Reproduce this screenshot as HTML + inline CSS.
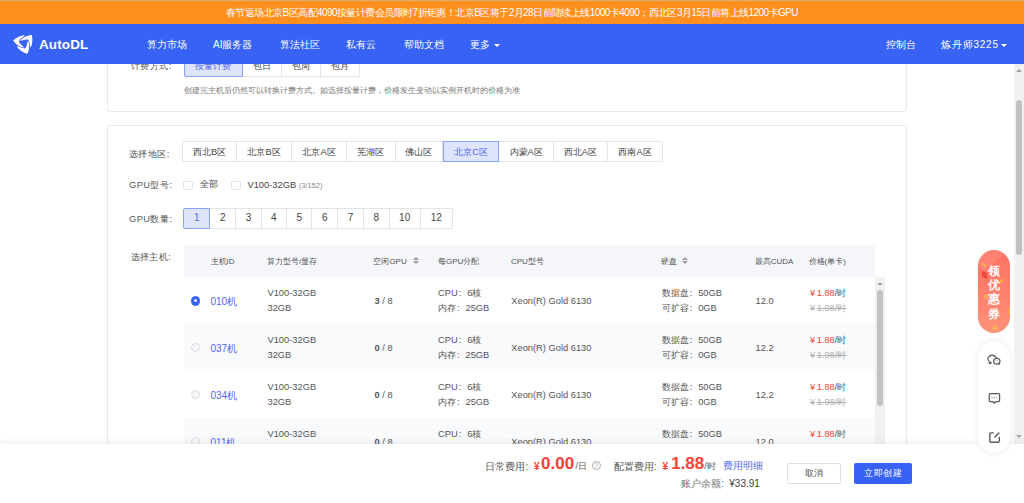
<!DOCTYPE html>
<html><head><meta charset="utf-8">
<style>
*{box-sizing:border-box;margin:0;padding:0}
html,body{width:1024px;height:503px;overflow:hidden;background:#fff}
body{position:relative;font-family:"Liberation Sans",sans-serif;color:#333;font-size:9.3px}
.a{position:absolute;white-space:nowrap}
#banner{left:0;top:0;width:1024px;height:24px;background:#ff9020;border-top:1px solid #dcae72;color:#fff;font-size:10px;letter-spacing:-0.56px;z-index:5;line-height:23px;text-align:center}
#nav{left:0;top:24px;width:1024px;height:40px;background:#3762f4;color:#fff;font-size:10px;z-index:5}
#nav .i{position:absolute;top:0.8px;line-height:40px}
.card{position:absolute;border:1px solid #e9eaee;border-radius:3px;background:#fff}
.lbl{color:#555;font-size:9.3px;letter-spacing:0.45px}
.bg{position:absolute;display:flex;height:20px}
.bg div{border:1px solid #e3e4e8;border-left:none;height:100%;display:flex;align-items:center;justify-content:center;color:#444;font-size:9.3px}
.bg div:first-child{border-left:1px solid #e3e4e8;border-radius:2px 0 0 2px}
.bg div:last-child{border-radius:0 2px 2px 0}
.rg div{padding-top:1.5px}
.cnt div{padding-bottom:1.5px;font-size:10px}
.bg div.sel{background:#dde4fc;border:1px solid #88a2f7;color:#5468f2}
.th{position:absolute;top:246px;line-height:32px;font-size:8px;color:#555}
.srt{position:absolute;top:256.7px;width:6px;height:8px}
.srt:before{content:"";position:absolute;left:0;top:0;border-left:3px solid transparent;border-right:3px solid transparent;border-bottom:3px solid #9a9a9a}
.srt:after{content:"";position:absolute;left:0;top:4.7px;border-left:3px solid transparent;border-right:3px solid transparent;border-top:3px solid #9a9a9a}
.k{display:inline-block;width:9.5px;padding-left:1px}
.row{position:absolute;left:184px;width:691px;height:47px}
.row.s{background:#f9fafc}
.c{position:absolute;font-size:9.3px;color:#555;line-height:15px;white-space:nowrap}
.radio{position:absolute;left:6.6px;top:19.3px;width:9.7px;height:9.7px;border-radius:50%;border:1px solid #dcdde0;background:#f6f7f9}
.radio.on{background:#3762f4;border-color:#3762f4}
.radio.on:after{content:"";position:absolute;left:2.1px;top:2.1px;width:3.5px;height:3.5px;border-radius:50%;background:#fff}
.red{color:#f44336}
</style></head><body>

<div id="banner" class="a">春节返场北京B区高配4090按量计费会员限时7折钜惠！北京B区将于2月28日前陆续上线1000卡4090；西北区3月15日前将上线1200卡GPU</div>

<!-- card 1 (scrolled) -->
<div class="card" style="left:107px;top:20px;width:800px;height:92px">
</div>
<div class="a lbl" style="left:131px;top:58.5px;line-height:14px">计费方式:</div>
<div class="bg" style="left:184px;top:56.5px">
  <div class="sel" style="width:58.5px">按量计费</div>
  <div style="width:39px">包日</div>
  <div style="width:39.5px">包周</div>
  <div style="width:39px">包月</div>
</div>
<div class="a" style="left:184px;top:84px;line-height:13px;font-size:8px;color:#777">创建完主机后仍然可以转换计费方式。如选择按量计费，价格发生变动以实例开机时的价格为准</div>

<!-- card 2 -->
<div class="card" style="left:107px;top:124.6px;width:800px;height:400px"></div>
<div class="a lbl" style="left:129px;top:146.5px;line-height:15px">选择地区:</div>
<div class="bg rg" style="left:182px;top:141.2px;height:20.6px">
  <div style="width:55px">西北B区</div>
  <div style="width:55px">北京B区</div>
  <div style="width:55px">北京A区</div>
  <div style="width:48.5px">芜湖区</div>
  <div style="width:47.2px">佛山区</div>
  <div class="sel" style="width:56.8px">北京C区</div>
  <div style="width:54.3px">内蒙A区</div>
  <div style="width:54px">西北A区</div>
  <div style="width:55.5px">西南A区</div>
</div>

<div class="a lbl" style="left:129px;top:177.5px;line-height:15px">GPU型号:</div>
<div class="a" style="left:183.3px;top:180.5px;width:10px;height:9.5px;border:1px solid #e2e3e8;border-radius:2px"></div>
<div class="a" style="left:200px;top:177px;line-height:15px;color:#444">全部</div>
<div class="a" style="left:231.3px;top:180.5px;width:10px;height:9.5px;border:1px solid #e2e3e8;border-radius:2px"></div>
<div class="a" style="left:247.5px;top:177.5px;line-height:15px;color:#444">V100-32GB <span style="font-size:7.5px;color:#888">(3/152)</span></div>

<div class="a lbl" style="left:129px;top:212px;line-height:15px">GPU数量:</div>
<div class="bg cnt" style="left:183.3px;top:207.6px;height:21.7px">
  <div class="sel" style="width:27.2px">1</div>
  <div style="width:25.7px">2</div>
  <div style="width:25.5px">3</div>
  <div style="width:25.3px">4</div>
  <div style="width:25.5px">5</div>
  <div style="width:25.7px">6</div>
  <div style="width:25.5px">7</div>
  <div style="width:26px">8</div>
  <div style="width:31px">10</div>
  <div style="width:32.3px">12</div>
</div>

<div class="a lbl" style="left:130.5px;top:249.5px;line-height:15px">选择主机:</div>

<!-- table header -->
<div class="a" style="left:184px;top:245px;width:691px;height:32px;background:#f4f6fa"></div>
<div class="th" style="left:210.5px">主机ID</div>
<div class="th" style="left:267px">算力型号/显存</div>
<div class="th" style="left:373.4px">空闲GPU</div><div class="srt" style="left:412.5px"></div>
<div class="th" style="left:438px">每GPU分配</div>
<div class="th" style="left:511px">CPU型号</div>
<div class="th" style="left:661px">硬盘</div><div class="srt" style="left:682.2px"></div>
<div class="th" style="left:754.7px">最高CUDA</div>
<div class="th" style="left:808.6px">价格(单卡)</div>

<!-- rows -->
<div class="row" style="top:276.6px">
  <div class="radio on"></div>
  <div class="c" style="left:26.5px;top:17px;color:#5468f2;font-size:10px">010机</div>
  <div class="c" style="left:83.5px;top:9.5px">V100-32GB<br>32GB</div>
  <div class="c" style="left:190.5px;top:17px"><b>3</b> / 8</div>
  <div class="c" style="left:254px;top:9.5px">CPU<span class="k">:</span>6核<br>内存<span class="k">:</span>25GB</div>
  <div class="c" style="left:327.3px;top:17px">Xeon(R) Gold 6130</div>
  <div class="c" style="left:477.7px;top:9.5px">数据盘<span class="k">:</span>50GB<br>可扩容<span class="k">:</span>0GB</div>
  <div class="c" style="left:571.5px;top:17px">12.0</div>
  <div class="c" style="left:626px;top:9.5px"><span class="red"><span style="margin-right:1.5px">¥</span>1.88</span>/时<br><s style="color:#b0b0b0">¥<span style="margin-left:1.5px">1.98/时</span></s></div>
</div>
<div class="row s" style="top:323.5px">
  <div class="radio"></div>
  <div class="c" style="left:26.5px;top:17px;color:#5468f2;font-size:10px">037机</div>
  <div class="c" style="left:83.5px;top:9.5px">V100-32GB<br>32GB</div>
  <div class="c" style="left:190.5px;top:17px"><b>0</b> / 8</div>
  <div class="c" style="left:254px;top:9.5px">CPU<span class="k">:</span>6核<br>内存<span class="k">:</span>25GB</div>
  <div class="c" style="left:327.3px;top:17px">Xeon(R) Gold 6130</div>
  <div class="c" style="left:477.7px;top:9.5px">数据盘<span class="k">:</span>50GB<br>可扩容<span class="k">:</span>0GB</div>
  <div class="c" style="left:571.5px;top:17px">12.2</div>
  <div class="c" style="left:626px;top:9.5px"><span class="red"><span style="margin-right:1.5px">¥</span>1.88</span>/时<br><s style="color:#b0b0b0">¥<span style="margin-left:1.5px">1.98/时</span></s></div>
</div>
<div class="row" style="top:370.5px">
  <div class="radio"></div>
  <div class="c" style="left:26.5px;top:17px;color:#5468f2;font-size:10px">034机</div>
  <div class="c" style="left:83.5px;top:9.5px">V100-32GB<br>32GB</div>
  <div class="c" style="left:190.5px;top:17px"><b>0</b> / 8</div>
  <div class="c" style="left:254px;top:9.5px">CPU<span class="k">:</span>6核<br>内存<span class="k">:</span>25GB</div>
  <div class="c" style="left:327.3px;top:17px">Xeon(R) Gold 6130</div>
  <div class="c" style="left:477.7px;top:9.5px">数据盘<span class="k">:</span>50GB<br>可扩容<span class="k">:</span>0GB</div>
  <div class="c" style="left:571.5px;top:17px">12.2</div>
  <div class="c" style="left:626px;top:9.5px"><span class="red"><span style="margin-right:1.5px">¥</span>1.88</span>/时<br><s style="color:#b0b0b0">¥<span style="margin-left:1.5px">1.98/时</span></s></div>
</div>
<div class="row s" style="top:417.5px">
  <div class="radio"></div>
  <div class="c" style="left:26.5px;top:17px;color:#5468f2;font-size:10px">011机</div>
  <div class="c" style="left:83.5px;top:9.5px">V100-32GB<br>32GB</div>
  <div class="c" style="left:190.5px;top:17px"><b>0</b> / 8</div>
  <div class="c" style="left:254px;top:9.5px">CPU<span class="k">:</span>6核<br>内存<span class="k">:</span>25GB</div>
  <div class="c" style="left:327.3px;top:17px">Xeon(R) Gold 6130</div>
  <div class="c" style="left:477.7px;top:9.5px">数据盘<span class="k">:</span>50GB<br>可扩容<span class="k">:</span>0GB</div>
  <div class="c" style="left:571.5px;top:17px">12.0</div>
  <div class="c" style="left:626px;top:9.5px"><span class="red"><span style="margin-right:1.5px">¥</span>1.88</span>/时<br><s style="color:#b0b0b0">¥<span style="margin-left:1.5px">1.98/时</span></s></div>
</div>

<!-- table scrollbar -->
<div class="a" style="left:875px;top:277px;width:10px;height:200px;background:#f1f1f1"></div>
<div class="a" style="left:877.2px;top:289.7px;width:6px;height:116.5px;background:#c1c1c1;border-radius:3px"></div>
<div class="a" style="left:877px;top:281.8px;width:0;height:0;border-left:3px solid transparent;border-right:3px solid transparent;border-bottom:3.3px solid #a3a3a3"></div>

<!-- nav -->
<div id="nav" class="a">
  <svg class="a" style="left:11px;top:8px" width="24" height="24" viewBox="0 0 24 24"><g fill="#fff" transform="rotate(5 13.4 10.9) translate(-0.3 0.2)">
<path id="lb" d="M12.8,3.5 C9.4,4.1 5.4,6.6 2.9,9.3 C5,12 9,14.3 12.9,15 C10.6,13.4 8.2,11.5 7.6,9.6 C8.3,7.5 10.4,5.3 12.8,3.5 Z" stroke="#fff" stroke-width="1" stroke-linejoin="round"/>
<use href="#lb" transform="rotate(120 13.4 10.9)"/><use href="#lb" transform="rotate(240 13.4 10.9)"/></g></svg>
  <div class="i" style="left:39px;top:0.7px;font-weight:bold;font-size:13.5px;letter-spacing:0.1px">AutoDL</div>
  <div class="i" style="left:147px">算力市场</div>
  <div class="i" style="left:213px">AI服务器</div>
  <div class="i" style="left:280px">算法社区</div>
  <div class="i" style="left:346px">私有云</div>
  <div class="i" style="left:403.5px">帮助文档</div>
  <div class="i" style="left:470px">更多</div><div class="a" style="left:493.5px;top:19.5px;width:0;height:0;border-left:3.3px solid transparent;border-right:3.3px solid transparent;border-top:3.6px solid #fff"></div>
  <div class="i" style="left:885.5px">控制台</div>
  <div class="i" style="left:941px;letter-spacing:0.8px">炼丹师3225</div><div class="a" style="left:1001px;top:19.5px;width:0;height:0;border-left:3.3px solid transparent;border-right:3.3px solid transparent;border-top:3.6px solid #fff"></div>
</div>

<!-- main scrollbar -->
<div class="a" style="left:1014px;top:64px;width:10px;height:380px;background:#f1f1f1"></div>
<div class="a" style="left:1016px;top:100px;width:6px;height:155px;background:#c1c1c1;border-radius:3px"></div>
<div class="a" style="left:1015.5px;top:68.5px;width:0;height:0;border-left:3.5px solid transparent;border-right:3.5px solid transparent;border-bottom:3.5px solid #a3a3a3"></div>
<div class="a" style="left:1015.5px;top:435px;width:0;height:0;border-left:3.5px solid transparent;border-right:3.5px solid transparent;border-top:3.5px solid #a3a3a3"></div>

<!-- bottom bar -->
<div class="a" style="left:0;top:444px;width:1024px;height:59px;background:#fff;box-shadow:0 -2px 6px rgba(30,40,90,0.07)"></div>

<div class="a" style="left:485px;top:459.3px;line-height:15px;color:#555;font-size:10px;letter-spacing:0.1px">日常费用:</div>
<div class="a red" style="left:534px;top:458.5px;line-height:15px;font-size:10px;font-weight:bold">¥</div>
<div class="a red" style="left:541px;top:454px;line-height:20px;font-size:17px;font-weight:bold">0.00</div>
<div class="a" style="left:575.5px;top:458.8px;line-height:15px;color:#555">/日</div>
<div class="a" style="left:591.7px;top:461px;width:9px;height:9px;border:1px solid #aaa;border-radius:50%;font-size:6.5px;line-height:7px;text-align:center;color:#999">?</div>
<div class="a" style="left:613.8px;top:459px;line-height:15px;color:#555;font-size:10px">配置费用:</div>
<div class="a red" style="left:662.5px;top:458.5px;line-height:15px;font-size:10px;font-weight:bold">¥</div>
<div class="a red" style="left:671.2px;top:454px;line-height:20px;font-size:17px;font-weight:bold">1.88</div>
<div class="a" style="left:704.2px;top:458.8px;line-height:15px;color:#555">/时</div>
<div class="a" style="left:723px;top:458.2px;line-height:15px;color:#5468f2;font-size:10px">费用明细</div>
<div class="a" style="left:681px;top:476.3px;line-height:15px;color:#777;font-size:10px">账户余额:</div>
<div class="a" style="left:729.3px;top:476.3px;line-height:15px;color:#444;font-size:10px">¥33.91</div>
<div class="a" style="left:787px;top:463px;width:54px;height:21.3px;border:1px solid #dcdfe6;border-radius:2px;line-height:19px;text-align:center;color:#555">取消</div>
<div class="a" style="left:853.7px;top:463px;width:58.3px;height:21.3px;background:#3762f4;border-radius:2px;line-height:21px;text-align:center;color:#fff;letter-spacing:0.6px;padding-left:0.6px">立即创建</div>

<div class="a" style="left:978px;top:250px;width:32px;height:82.5px;border-radius:16px;background:linear-gradient(170deg,#ff6f5f,#ff937b);overflow:hidden">
 <div class="a" style="left:-6px;top:-10px;width:60px;height:14px;background:rgba(255,255,255,0.10);transform:rotate(-40deg)"></div>
 <div class="a" style="left:3px;top:14px;width:6px;height:2px;background:#ffb347;transform:rotate(40deg)"></div>
 <div class="a" style="left:4px;top:21.5px;width:5px;height:6px;background:#ec4a35;transform:skewY(25deg)"></div>
 <div class="a" style="left:21px;top:30px;width:5px;height:2px;background:#ffb347;transform:rotate(-45deg)"></div>
 <div class="a" style="left:6px;top:44px;width:5px;height:5px;border-radius:50%;background:rgba(255,176,90,0.8)"></div>
 <div class="a" style="left:28.5px;top:60px;width:5px;height:2px;background:#ffb347;transform:rotate(-60deg)"></div>
 <div class="a" style="left:14px;top:74.5px;width:6px;height:6px;border-radius:50%;background:rgba(255,176,90,0.8)"></div>
 <div class="a" style="left:0;top:13.5px;width:32px;line-height:14.4px;text-align:center;color:#fff;font-weight:bold;font-size:11.5px;white-space:normal">领<br>优<br>惠<br>券</div>
</div>
<div class="a" style="left:978px;top:340.6px;width:32px;height:112px;border-radius:16px;background:#fff;box-shadow:0 0 6px rgba(0,0,0,0.09)"></div>
<svg class="a" style="left:984px;top:350px" width="20" height="100" viewBox="984 350 20 100" fill="none" stroke="#5a5a5a" stroke-linecap="round" stroke-linejoin="round">
 <path d="M990.1,362.2 A4.2,3.8 0 1 1 993.7,362.4" stroke-width="1.2"/>
 <path d="M990.1,362.2 L989.1,363.6 L991.4,362.9" stroke-width="1.1"/>
 <ellipse cx="996.8" cy="361.2" rx="3.2" ry="2.9" fill="#fff" stroke-width="1.2"/>
 <path d="M998.6,363.4 L999.6,364.3 L999.3,362.8" stroke-width="1"/>
 <circle cx="990.6" cy="356.8" r="0.45" fill="#5a5a5a" stroke="none"/><circle cx="993.2" cy="356.8" r="0.45" fill="#5a5a5a" stroke="none"/>
 <circle cx="995.8" cy="360.6" r="0.4" fill="#5a5a5a" stroke="none"/><circle cx="997.8" cy="360.6" r="0.4" fill="#5a5a5a" stroke="none"/>
 <path d="M990.4,393.6 h8.1 a1.1,1.1 0 0 1 1.1,1.1 v5.9 a1.1,1.1 0 0 1 -1.1,1.1 h-2.8 l-1.4,1.5 l-1.4,-1.5 h-2.5 a1.1,1.1 0 0 1 -1.1,-1.1 v-5.9 a1.1,1.1 0 0 1 1.1,-1.1 z" stroke-width="1.25"/>
 <circle cx="992.1" cy="397.7" r="0.6" fill="#888" stroke="none"/><circle cx="994.4" cy="397.7" r="0.6" fill="#888" stroke="none"/><circle cx="996.7" cy="397.7" r="0.6" fill="#888" stroke="none"/>
 <path d="M993.2,432.9 h-2.3 a1.1,1.1 0 0 0 -1.1,1.1 v7.1 a1.1,1.1 0 0 0 1.1,1.1 h7.3 a1.1,1.1 0 0 0 1.1,-1.1 v-3.6" stroke-width="1.4"/>
 <path d="M994.9,436.9 L998.9,432.9" stroke-width="1.4"/>
</svg>
</body></html>
